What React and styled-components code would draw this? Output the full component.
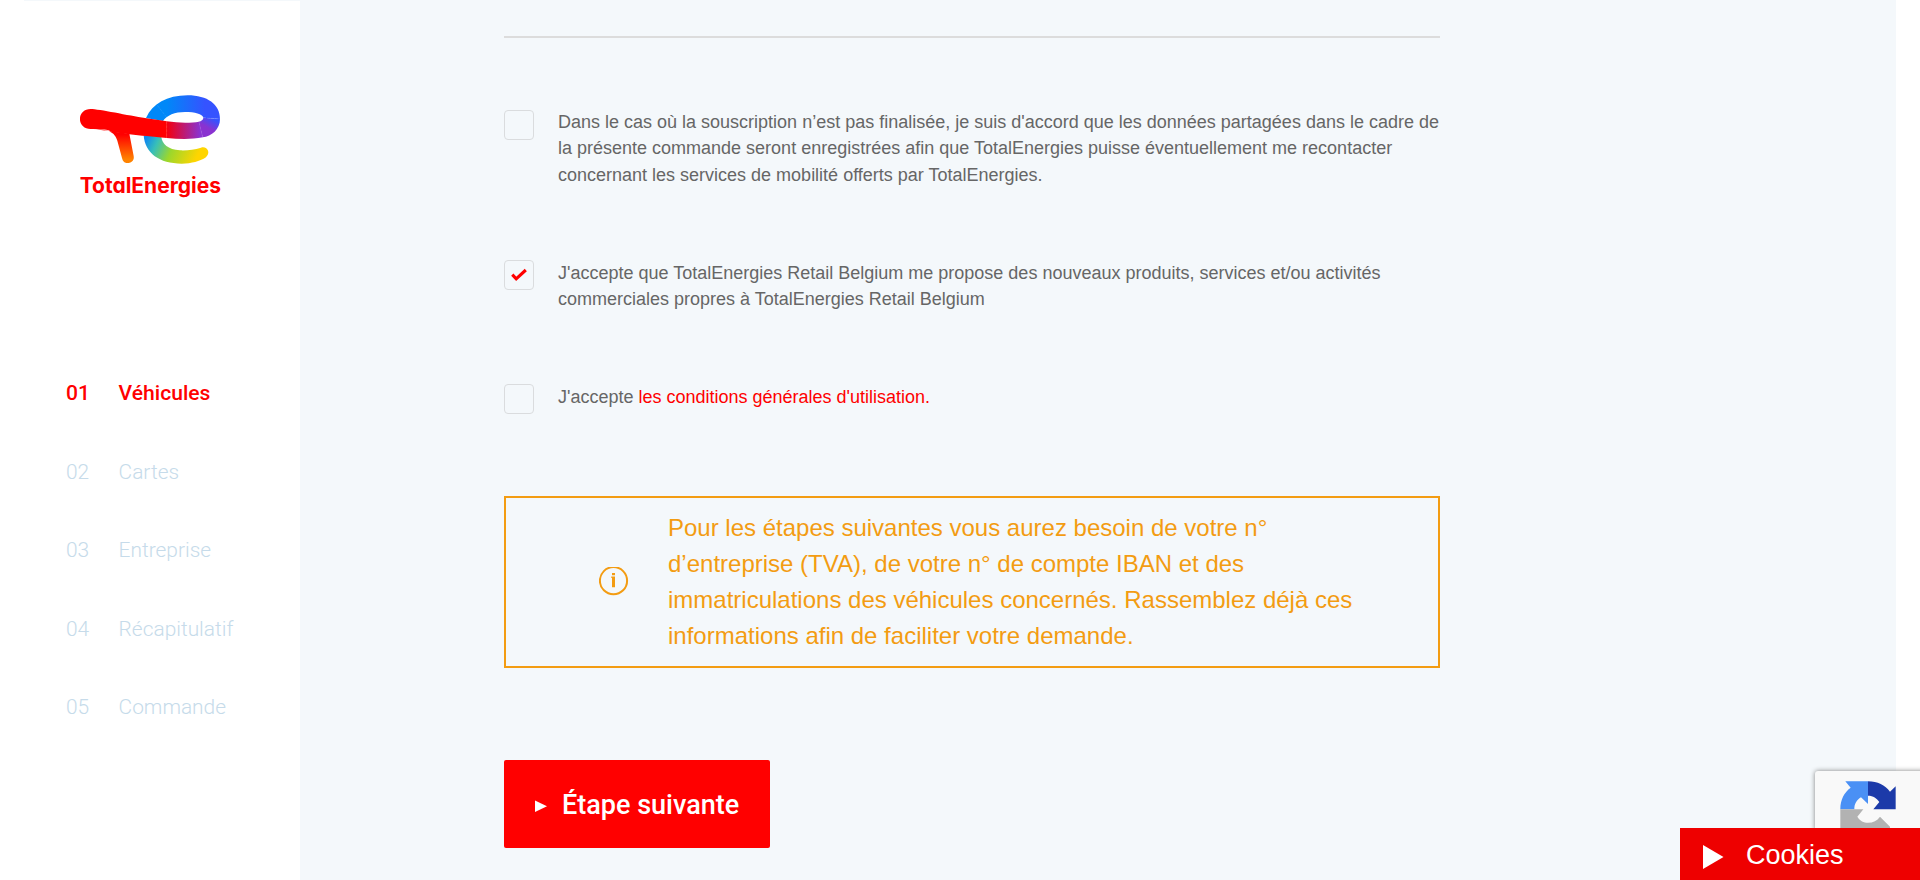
import React from "react";
import styled, { createGlobalStyle } from "styled-components";

const GlobalStyle = createGlobalStyle`
  * { box-sizing: border-box; }
  html, body { margin: 0; padding: 0; background: #fff; overflow: hidden; }
  body { font-family: "Liberation Sans", Arial, sans-serif; }
`;

const Page = styled.div`
  display: flex;
  width: 1872px;
  height: 880px;
  margin: 0 auto;
  padding-top: 1px;
  background: #f4f8fb;
  overflow: hidden;
`;

const Sidebar = styled.aside`
  flex: none;
  width: 276px;
  background: #fff;
`;

const LogoLink = styled.a`
  display: block;
  padding: 93px 0 0 56px;
  height: 372px;
`;

const Wordmark = styled.text`
  font-family: Inter, sans-serif;
  font-size: 63px;
  font-weight: 700;
  font-feature-settings: "cv11";
  fill: #ff0000;
`;

const Steps = styled.ol`
  list-style: none;
  margin: 0;
  padding: 0 0 0 42px;
`;

const Step = styled.li`
  display: flex;
  height: 78.6px;
  line-height: 40px;
  font-family: Roboto, sans-serif;
  font-size: ${(p) => (p.$active ? "21.1px" : "20.9px")};
  font-weight: ${(p) => (p.$active ? 500 : 300)};
  color: ${(p) => (p.$active ? "#ff0000" : "#c6dbea")};
`;

const StepNumber = styled.span`
  width: 52.6px;
`;

const Main = styled.main`
  display: flex;
  flex-direction: column;
  align-items: flex-start;
  width: 936px;
  margin-left: 204px;
  padding-top: 35px;
`;

const Divider = styled.hr`
  width: 100%;
  height: 2px;
  margin: 0;
  border: 0;
  background: #dcdcdc;
`;

const Consent = styled.label`
  display: flex;
  gap: 24px;
  margin-top: ${(p) => p.$gap}px;
  height: ${(p) => p.$height}px;
`;

const Box = styled.span`
  flex: none;
  display: flex;
  align-items: center;
  justify-content: center;
  width: 30px;
  height: 30px;
  border: 1px solid #dadcde;
  border-radius: 4px;
`;

const ConsentText = styled.span`
  margin-top: ${(p) => (p.$raised ? "-1px" : "0")};
  font-size: 18px;
  line-height: 26.4px;
  color: #666;
  white-space: nowrap;
`;

const TermsLink = styled.a`
  color: #ff0000;
`;

const Notice = styled.section`
  display: flex;
  align-items: center;
  width: 100%;
  height: 172px;
  margin-top: 82px;
  padding-left: 93px;
  border: 2px solid #f39c12;
  color: #f39c12;
`;

const NoticeText = styled.p`
  margin: 0 0 0 39px;
  font-size: 24px;
  line-height: 36px;
  white-space: nowrap;
`;

const NextButton = styled.button`
  display: flex;
  align-items: center;
  width: 266px;
  height: 88px;
  margin-top: 92px;
  padding: 2px 0 0 31px;
  gap: 15px;
  border: 0;
  border-radius: 2px;
  background: #ff0000;
  color: #fff;
  font: 500 27px Roboto, sans-serif;
  white-space: nowrap;
`;

const PlayIcon = styled.svg`
  flex: none;
  margin-top: ${(p) => p.$drop}px;
`;

const CaptchaBadge = styled.div`
  position: fixed;
  right: -151px;
  bottom: 49px;
  width: 256px;
  height: 60px;
  border-radius: 3px;
  background: #f9f9f9;
  box-shadow: 0 0 5px gray;
`;

const CaptchaIcon = styled.svg`
  display: block;
  margin: 10px 0 0 25px;
`;

const CookieBar = styled.div`
  position: fixed;
  right: 0;
  bottom: 0;
  display: flex;
  align-items: center;
  gap: 22px;
  width: 240px;
  height: 52px;
  padding: 2px 0 0 23px;
  background: #ee0000;
  color: #fff;
  font-size: 27px;
`;

function Logo() {
  return (
    <svg width="142" height="108" viewBox="30 26 426 324">
      <defs>
        <linearGradient id="loop" gradientUnits="userSpaceOnUse" x1="290" y1="0" x2="405" y2="0">
          <stop offset="0" stopColor="#0088f8" />
          <stop offset="1" stopColor="#3553ff" />
        </linearGradient>
        <linearGradient id="turn" gradientUnits="userSpaceOnUse" x1="428" y1="99" x2="412" y2="127">
          <stop offset="0" stopColor="#3553ff" />
          <stop offset="1" stopColor="#8a32d0" />
        </linearGradient>
        <linearGradient id="bar" gradientUnits="userSpaceOnUse" x1="290" y1="0" x2="390" y2="0">
          <stop offset="0" stopColor="#f5000c" />
          <stop offset="1" stopColor="#8a32d0" />
        </linearGradient>
        <linearGradient id="tail" gradientUnits="userSpaceOnUse" x1="228" y1="158" x2="376" y2="226">
          <stop offset="0" stopColor="#0f88f0" />
          <stop offset="0.22" stopColor="#38bfb8" />
          <stop offset="0.52" stopColor="#9cd72c" />
          <stop offset="1" stopColor="#ffd500" />
        </linearGradient>
        <linearGradient id="stem" gradientUnits="userSpaceOnUse" x1="0" y1="148" x2="0" y2="222">
          <stop offset="0" stopColor="#ff0000" />
          <stop offset="1" stopColor="#ff8200" />
        </linearGradient>
      </defs>
      <path fill="url(#tail)" d="M221 150C225 204 268 235 335 235C366 234 389 227 406 217C425 203 411 181 393 187C372 193 352 196 330 195C294 192 276 176 274 154Z" />
      <path fill="url(#loop)" d="M228 98C248 55 290 30 353 30C412 30 450 57 450 101L400 97C397 86 375 80 345 80C315 80 290 90 279 107Z" />
      <path fill="url(#turn)" d="M450 101C450 132 425 153 398 156L386 109C394 107 400 103 400 97Z" />
      <path fill="url(#bar)" d="M290 108C326 113 363 113 387 109L398.5 156C362 163 326 161 290 158Z" />
      <path fill="url(#stem)" d="M70 131C117 133 133 139 142 166L156 218C159 231 167 234 175 233C187 231 193 224 191 212L178 145Z" />
      <path fill="#ff0000" d="M62 71C86 71 178 91 225 98L290.5 108V158C246 154 212 151 178 147L126 140C112 131 96 131 62 131C19 131 19 71 62 71Z" />
      <path d="M262 60L290 96M399 97L450 101M387 109L398 156M290 108V158" stroke="#fff" strokeOpacity="0.3" strokeWidth="1.1" fill="none" strokeDasharray="9 3" />
      <Wordmark x="29" y="324.5" textLength="424" lengthAdjust="spacingAndGlyphs">TotalEnergies</Wordmark>
    </svg>
  );
}

const steps = ["Véhicules", "Cartes", "Entreprise", "Récapitulatif", "Commande"];

export default function App() {
  return (
    <>
      <GlobalStyle />
      <Page>
        <Sidebar>
          <LogoLink><Logo /></LogoLink>
          <Steps>
            {steps.map((name, i) => (
              <Step key={name} $active={i === 0}>
                <StepNumber>0{i + 1}</StepNumber>
                <span>{name}</span>
              </Step>
            ))}
          </Steps>
        </Sidebar>
        <Main>
          <Divider />
          <Consent $gap={72} $height={79}>
            <Box />
            <ConsentText $raised>
              Dans le cas où la souscription n’est pas finalisée, je suis d'accord que les données partagées dans le cadre de<br />
              la présente commande seront enregistrées afin que TotalEnergies puisse éventuellement me recontacter<br />
              concernant les services de mobilité offerts par TotalEnergies.
            </ConsentText>
          </Consent>
          <Consent $gap={71} $height={53}>
            <Box>
              <svg width="16" height="14" viewBox="0 0 16 14">
                <path d="M1.3 6.6L5.2 10.8L14.8 2" fill="none" stroke="#ff0000" strokeWidth="3.1" />
              </svg>
            </Box>
            <ConsentText>
              J'accepte que TotalEnergies Retail Belgium me propose des nouveaux produits, services et/ou activités<br />
              commerciales propres à TotalEnergies Retail Belgium
            </ConsentText>
          </Consent>
          <Consent $gap={71} $height={30}>
            <Box />
            <ConsentText>
              J'accepte <TermsLink>les conditions générales d'utilisation.</TermsLink>
            </ConsentText>
          </Consent>
          <Notice>
            <svg width="30" height="30" viewBox="0 0 30 30">
              <circle cx="14.5" cy="13.7" r="13.6" fill="none" stroke="#f39c12" strokeWidth="2" />
              <path d="M13 6H16V8.3H13ZM12.3 9.6H16V20.2H13V11H12.3Z" fill="#f39c12" />
            </svg>
            <NoticeText>
              Pour les étapes suivantes vous aurez besoin de votre n°<br />
              d’entreprise (TVA), de votre n° de compte IBAN et des<br />
              immatriculations des véhicules concernés. Rassemblez déjà ces<br />
              informations afin de faciliter votre demande.
            </NoticeText>
          </Notice>
          <NextButton>
            <PlayIcon $drop={2} width="12" height="12" viewBox="0 0 12 12"><path d="M0 0.5L12 6.2L0 12Z" fill="#fff" /></PlayIcon>
            Étape suivante
          </NextButton>
        </Main>
      </Page>
      <CaptchaBadge>
        <CaptchaIcon width="56" height="50" viewBox="540 93 168 150">
          <path fill="#4a90f5" d="M541 178C541 148 553 127 572 113L556 94H624V162L603 142C590 150 583 161 583 178Z" />
          <path fill="#1c3aa9" d="M624 94C653 94 675 105 690 125L707 109V178H640L658 156C650 145 640 137 624 137Z" />
          <path fill="#b2b2b2" d="M541 178H610L592 200C600 213 611 218 624 218C640 218 651 212 660 200L690 230V243H541Z" />
        </CaptchaIcon>
      </CaptchaBadge>
      <CookieBar>
        <PlayIcon $drop={4} width="21" height="24" viewBox="0 0 21 24"><path d="M0 0L20.5 12L0 24Z" fill="#fff" /></PlayIcon>
        Cookies
      </CookieBar>
    </>
  );
}
